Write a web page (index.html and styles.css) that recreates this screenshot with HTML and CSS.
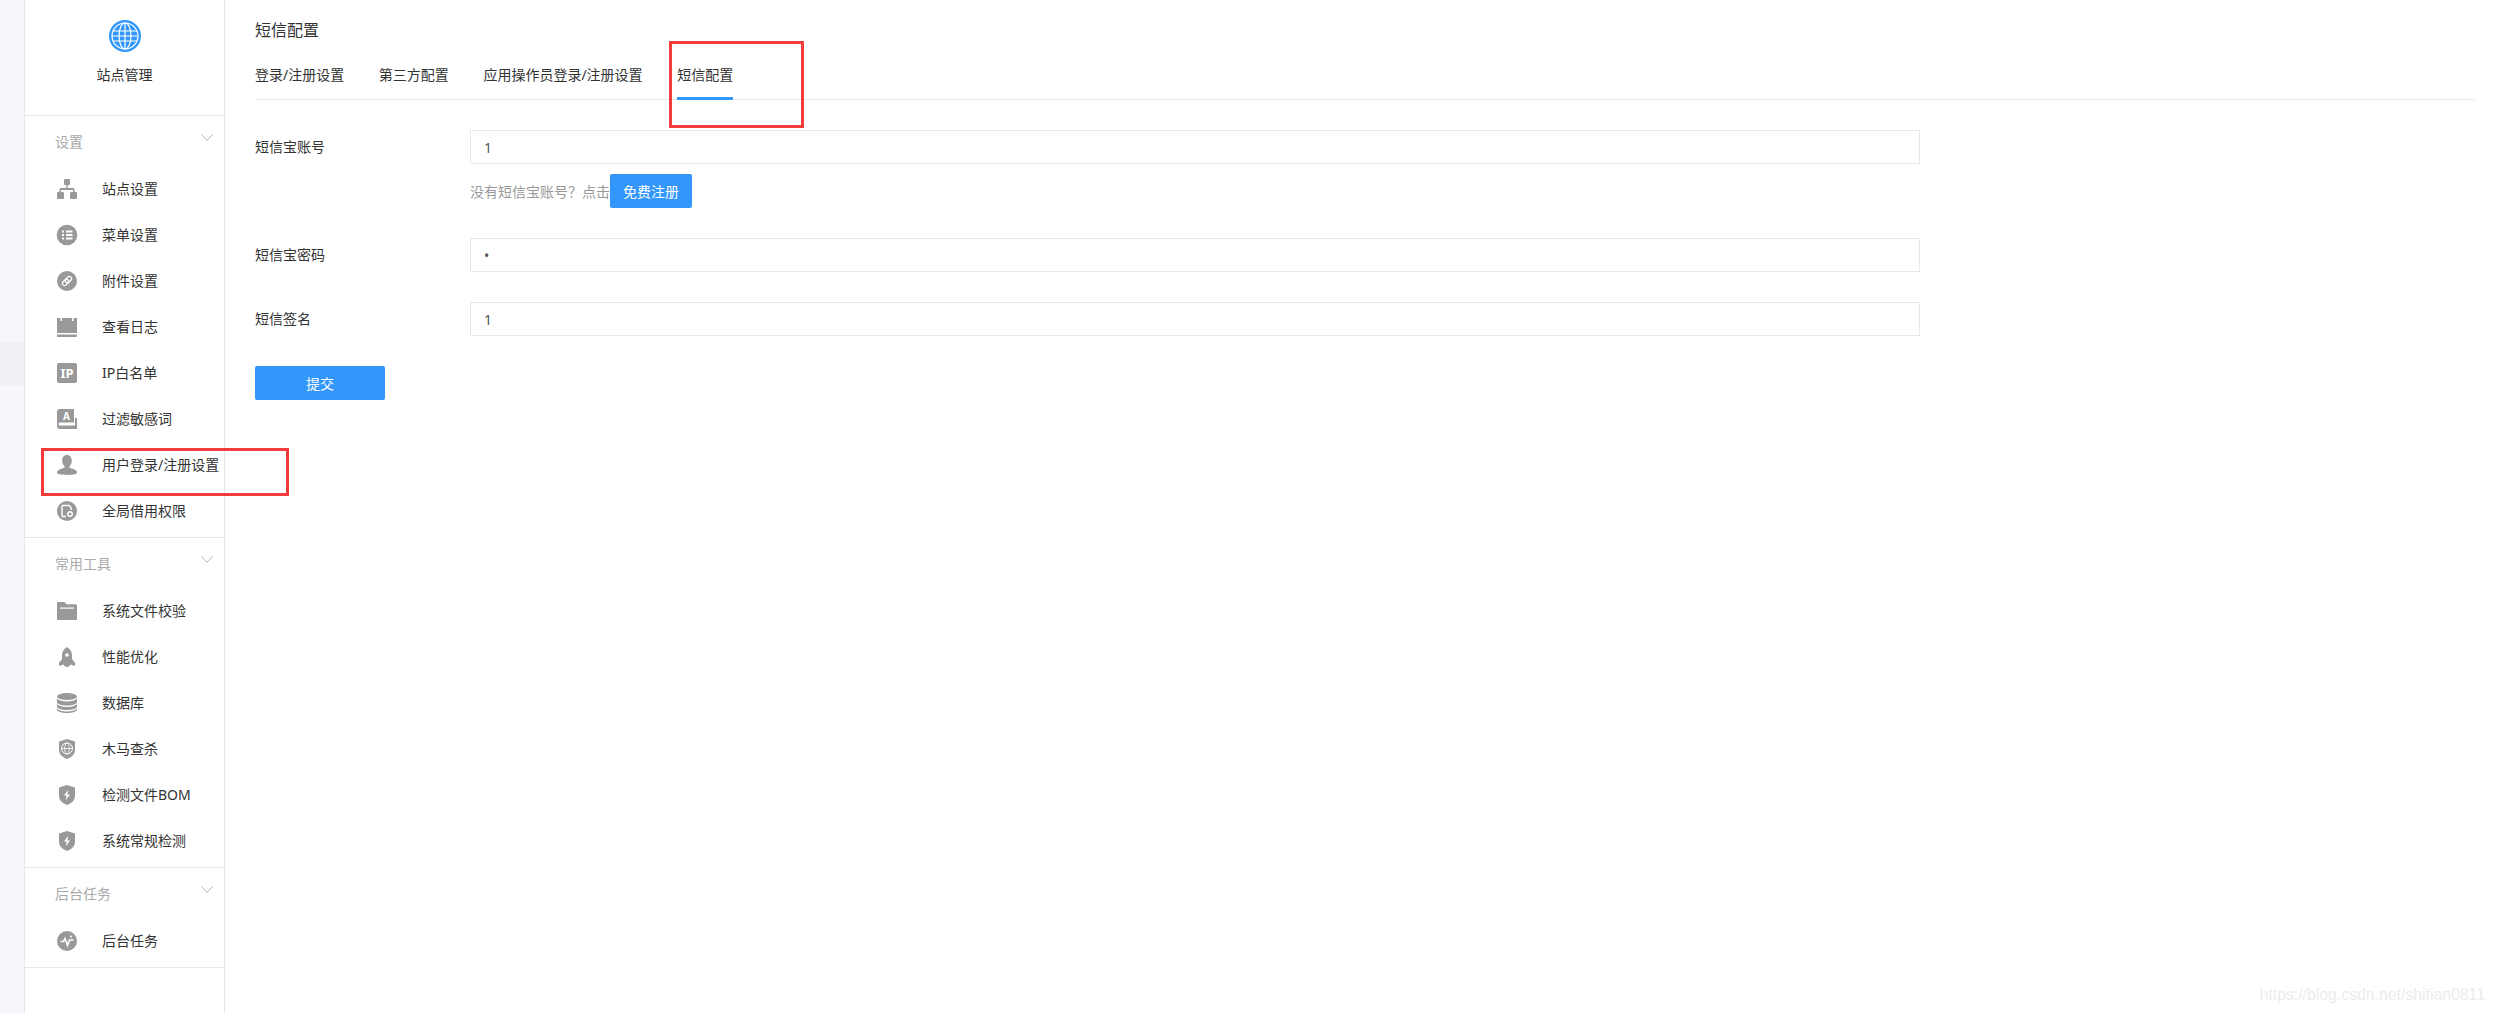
FILE: index.html
```html
<!DOCTYPE html>
<html lang="zh-CN">
<head>
    <meta charset="UTF-8">
    <meta name="viewport" content="width=device-width, initial-scale=1.0">
    <title>短信配置</title>
    <link rel="stylesheet" href="styles.css">
</head>
<body>
    <div class="gutter"><div class="gutter-active"></div></div>

    <aside class="sidebar">
        <div class="site-head">
            <svg class="globe" viewBox="0 0 32 32">
                <circle cx="16" cy="16" r="16" fill="#3296fa"/>
                <circle cx="16" cy="16" r="13" fill="none" stroke="#fff" stroke-width="1.2"/>
                <ellipse cx="16" cy="16" rx="6" ry="13" fill="none" stroke="#fff" stroke-width="1.2"/>
                <path d="M16 3v26M4 11h24M3 16h26M4 21h24" fill="none" stroke="#fff" stroke-width="1.2"/>
            </svg>
            <div class="site-title">站点管理</div>
        </div>

        <section class="group">
            <div class="group-title">
                <span>设置</span>
                <svg class="chevron" viewBox="0 0 12 7"><path d="M0.5 0.5 6 6.3 11.5 0.5" fill="none" stroke="#b4b4b4"/></svg>
            </div>
            <a class="item">
                <svg class="icon" viewBox="0 0 20 20"><path d="M8 0h4a1 1 0 0 1 1 1v4a1 1 0 0 1-1 1h-1.300v3H16a1.500 1.500 0 0 1 1.500 1.500V13H19a1 1 0 0 1 1 1v5a1 1 0 0 1-1 1h-5a1 1 0 0 1-1-1v-5a1 1 0 0 1 1-1h2v-2H4v2h2a1 1 0 0 1 1 1v5a1 1 0 0 1-1 1H1a1 1 0 0 1-1-1v-5a1 1 0 0 1 1-1h1.500v-2.500A1.500 1.500 0 0 1 4 9h5.300V6H8a1 1 0 0 1-1-1V1a1 1 0 0 1 1-1z"/></svg>
                <span>站点设置</span>
            </a>
            <a class="item">
                <svg class="icon" viewBox="0 0 20 20"><circle cx="10" cy="10" r="10.300"/><path d="M5 5.500h2v2H5zM9 5.500h6.500v2H9zM5 9h2v2H5zM9 9h6.500v2H9zM5 12.500h2v2H5zM9 12.500h6.500v2H9z" fill="#fff"/></svg>
                <span>菜单设置</span>
            </a>
            <a class="item">
                <svg class="icon" viewBox="0 0 20 20"><circle cx="10" cy="10" r="10"/><g fill="none" stroke="#fff" stroke-width="1.300" transform="rotate(-45 10 10)"><rect x="4.500" y="7.800" width="7" height="4.400" rx="2.200"/><rect x="8.500" y="7.800" width="7" height="4.400" rx="2.200"/></g></svg>
                <span>附件设置</span>
            </a>
            <a class="item">
                <svg class="icon" viewBox="0 0 20 20"><path d="M0 1h3.500v3h1.500V1h10v3h1.500V1H20v15H0z"/><path d="M0 17.500h20V19a1 1 0 0 1-1 1H1a1 1 0 0 1-1-1z"/></svg>
                <span>查看日志</span>
            </a>
            <a class="item">
                <svg class="icon" viewBox="0 0 20 20"><rect width="20" height="20" rx="2"/><text x="10" y="15" class="icon-text">IP</text></svg>
                <span>IP白名单</span>
            </a>
            <a class="item">
                <svg class="icon" viewBox="0 0 20 20"><path d="M3 0h14v13.500H3a1.500 1.500 0 0 0 0 3h15V9h2v11H3a3 3 0 0 1-3-3V3a3 3 0 0 1 3-3z"/><text x="9.500" y="10.500" class="icon-text icon-text-sm">A</text></svg>
                <span>过滤敏感词</span>
            </a>
            <a class="item">
                <svg class="icon" viewBox="0 0 20 20"><path d="M10 0c3 0 4.800 2.400 4.800 5.600 0 2.300-.9 4.400-2.300 5.600v1.300c1.800 1.300 7.500 1.800 7.500 5.100 0 1.500-3 2.400-10 2.400S0 19.100 0 17.600c0-3.300 5.700-3.800 7.500-5.100v-1.300C6.100 10 5.200 7.900 5.200 5.600 5.200 2.400 7 0 10 0z"/></svg>
                <span>用户登录/注册设置</span>
            </a>
            <a class="item">
                <svg class="icon" viewBox="0 0 20 20"><circle cx="10" cy="10" r="10"/><path d="M5 4.500h7l2 2v2.500M9 15.500H5z" fill="none" stroke="#fff" stroke-width="1.400"/><path d="M5 4.500v11" stroke="#fff" stroke-width="1.400"/><circle cx="13" cy="13" r="2.300" fill="none" stroke="#fff" stroke-width="1.400"/></svg>
                <span>全局借用权限</span>
            </a>
        </section>

        <section class="group">
            <div class="group-title">
                <span>常用工具</span>
                <svg class="chevron" viewBox="0 0 12 7"><path d="M0.5 0.5 6 6.3 11.500 0.5" fill="none" stroke="#b4b4b4"/></svg>
            </div>
            <a class="item">
                <svg class="icon" viewBox="0 0 20 20"><path d="M1 1h6.500l2 2.200H19a1 1 0 0 1 1 1V18a1 1 0 0 1-1 1H1a1 1 0 0 1-1-1V2a1 1 0 0 1 1-1z"/><path d="M3 6.500h14v1.200H3z" fill="#fff"/></svg>
                <span>系统文件校验</span>
            </a>
            <a class="item">
                <svg class="icon" viewBox="0 0 20 20"><path d="M10 0c3.200 2 5 4.700 5 8v4l3 4v3l-4.500-1.500c-.7 1.200-2.100 2.500-3.500 2.500s-2.800-1.300-3.500-2.500L2 19v-3l3-4V8c0-3.300 1.800-6 5-8z"/><circle cx="10" cy="8" r="1.800" fill="#fff"/></svg>
                <span>性能优化</span>
            </a>
            <a class="item">
                <svg class="icon" viewBox="0 0 20 20"><ellipse cx="10" cy="3.500" rx="10" ry="3.500"/><path d="M0 5.500c1.500 2 5.500 3 10 3s8.500-1 10-3V9c0 2-4.500 3.500-10 3.500S0 11 0 9zM0 11c1.500 2 5.500 3 10 3s8.500-1 10-3v2.500c0 2-4.500 3.500-10 3.500S0 15.500 0 13.500zM0 15.500c1.500 2 5.500 3 10 3s8.500-1 10-3V16.500c0 2-4.500 3.500-10 3.500S0 18.500 0 16.500z"/></svg>
                <span>数据库</span>
            </a>
            <a class="item">
                <svg class="icon" viewBox="0 0 20 20"><path d="M10 0l8 2.500v8.500c0 4.200-3.500 7.200-8 9-4.500-1.800-8-4.800-8-9V2.500z"/><circle cx="10" cy="9.500" r="5.500" fill="none" stroke="#fff" stroke-width="1"/><ellipse cx="10" cy="9.500" rx="2.300" ry="5.500" fill="none" stroke="#fff" stroke-width=".8"/><path d="M4.500 9.500h11" stroke="#fff" stroke-width=".8"/></svg>
                <span>木马查杀</span>
            </a>
            <a class="item">
                <svg class="icon" viewBox="0 0 20 20"><path d="M10 0l8 2.500v8.500c0 4.200-3.500 7.200-8 9-4.500-1.800-8-4.800-8-9V2.500z"/><path d="M11 5 7 10.500h2.600L9 15l4-5.500h-2.600z" fill="#fff"/></svg>
                <span>检测文件BOM</span>
            </a>
            <a class="item">
                <svg class="icon" viewBox="0 0 20 20"><path d="M10 0l8 2.500v8.500c0 4.200-3.500 7.200-8 9-4.500-1.800-8-4.800-8-9V2.500z"/><path d="M11 5 7 10.500h2.600L9 15l4-5.500h-2.600z" fill="#fff"/></svg>
                <span>系统常规检测</span>
            </a>
        </section>

        <section class="group">
            <div class="group-title">
                <span>后台任务</span>
                <svg class="chevron" viewBox="0 0 12 7"><path d="M0.5 0.5 6 6.3 11.500 0.5" fill="none" stroke="#b4b4b4"/></svg>
            </div>
            <a class="item">
                <svg class="icon" viewBox="0 0 20 20"><circle cx="10" cy="10" r="10"/><path d="M3.500 10.500h3l1.500-3 2.500 7 2-5.500h4" fill="none" stroke="#fff" stroke-width="1.600"/><circle cx="14" cy="5.500" r="1" fill="#fff"/></svg>
                <span>后台任务</span>
            </a>
        </section>
    </aside>

    <main class="content">
        <h1 class="page-title">短信配置</h1>

        <nav class="tabs">
            <a class="tab">登录/注册设置</a>
            <a class="tab">第三方配置</a>
            <a class="tab">应用操作员登录/注册设置</a>
            <a class="tab active">短信配置</a>
        </nav>

        <form class="sms-form">
            <div class="form-row">
                <label for="account">短信宝账号</label>
                <div class="field">
                    <input type="text" id="account" value="1">
                    <div class="hint">
                        <span>没有短信宝账号？点击</span>
                        <button type="button" class="btn btn-small">免费注册</button>
                    </div>
                </div>
            </div>
            <div class="form-row">
                <label for="password">短信宝密码</label>
                <div class="field"><input type="password" id="password" value="1"></div>
            </div>
            <div class="form-row">
                <label for="sign">短信签名</label>
                <div class="field"><input type="text" id="sign" value="1"></div>
            </div>
            <button type="submit" class="btn btn-submit">提交</button>
        </form>
    </main>

    <!-- annotations drawn on top of the screenshot -->
    <div class="mark mark-tab"></div>
    <div class="mark mark-menu"></div>
    <div class="watermark">https://blog.csdn.net/shitian0811</div>
</body>
</html>
```

FILE: styles.css
```css
/* Reset some basic styles */
* {
    margin: 0;
    padding: 0;
    box-sizing: border-box;
}

body {
    font-family: "Noto Sans", "Noto Sans CJK SC", sans-serif;
    background-color: #fff;
    color: #333;
    display: flex;
    height: 1013px;
    overflow: hidden;
    position: relative;
    font-size: 14px;
}

/* Left strip */
.gutter {
    width: 24px;
    flex: none;
    background-color: #f6f7fa;
    padding-top: 342px;
}

.gutter-active {
    height: 43px;
    background-color: #f0f1f4;
}

/* Sidebar */
.sidebar {
    width: 201px;
    flex: none;
    border-left: 1px solid #e8e8e8;
    border-right: 1px solid #e8e8e8;
}

.site-head {
    height: 116px;
    padding-top: 20px;
    border-bottom: 1px solid #e8e8e8;
    display: flex;
    flex-direction: column;
    align-items: center;
}

.globe {
    width: 32px;
    height: 32px;
}

.site-title {
    margin-top: 12px;
    line-height: 22px;
}

.group {
    border-bottom: 1px solid #e8e8e8;
    padding-bottom: 4px;
}

.group-title {
    height: 49px;
    padding: 0 11px 0 30px;
    display: flex;
    justify-content: space-between;
    align-items: center;
    color: #aaa;
}

.chevron {
    width: 12px;
    height: 7px;
    margin-bottom: 6px;
}

.item {
    height: 46px;
    padding-left: 32px;
    display: flex;
    align-items: center;
    gap: 25px;
}

.icon {
    width: 20px;
    height: 20px;
    margin-top: 2px;
    fill: #999;
    flex: none;
    overflow: visible;
}

.icon-text {
    font-size: 13px;
    font-weight: 700;
    fill: #fff;
    text-anchor: middle;
}

.icon-text-sm {
    font-size: 10px;
}

/* Main area */
.content {
    flex: 1;
    padding: 0 18px 0 30px;
}

.page-title {
    font-size: 16px;
    font-weight: 400;
    line-height: 20px;
    padding-top: 20px;
    height: 40px;
}

.tabs {
    display: flex;
    gap: 34.6px;
    height: 60px;
    border-bottom: 1px solid #e8e8e8;
}

.tab {
    line-height: 70px;
    height: 60px;
}

.tab.active {
    border-bottom: 3px solid #3296fa;
}

.sms-form {
    padding-top: 30px;
}

.form-row {
    display: flex;
    margin-bottom: 30px;
}

.form-row label {
    width: 215px;
    flex: none;
    line-height: 34px;
}

.field {
    width: 1450px;
}

.field input {
    width: 100%;
    height: 34px;
    padding: 0 13px;
    border: 1.5px solid #e8e8e8;
    font-family: inherit;
    font-size: 14px;
    color: #555;
    outline: none;
}

.hint {
    display: flex;
    align-items: center;
    margin-top: 10px;
    color: #999;
}

.btn {
    background-color: #3296fa;
    color: #fff;
    border: none;
    border-radius: 2px;
    height: 34px;
    font-family: inherit;
    font-size: 14px;
    cursor: pointer;
}

.btn-small {
    width: 82px;
}

.btn-submit {
    width: 130px;
    display: block;
}

/* Red annotation boxes */
.mark {
    position: absolute;
    border: 3px solid #f33b3b;
}

.mark-tab {
    left: 669px;
    top: 41px;
    width: 135px;
    height: 87px;
}

.mark-menu {
    left: 41px;
    top: 448px;
    width: 248px;
    height: 48px;
}

.watermark {
    position: absolute;
    right: 8px;
    top: 986px;
    font-family: "Liberation Sans", sans-serif;
    font-size: 15.8px;
    color: #ececec;
}
```
